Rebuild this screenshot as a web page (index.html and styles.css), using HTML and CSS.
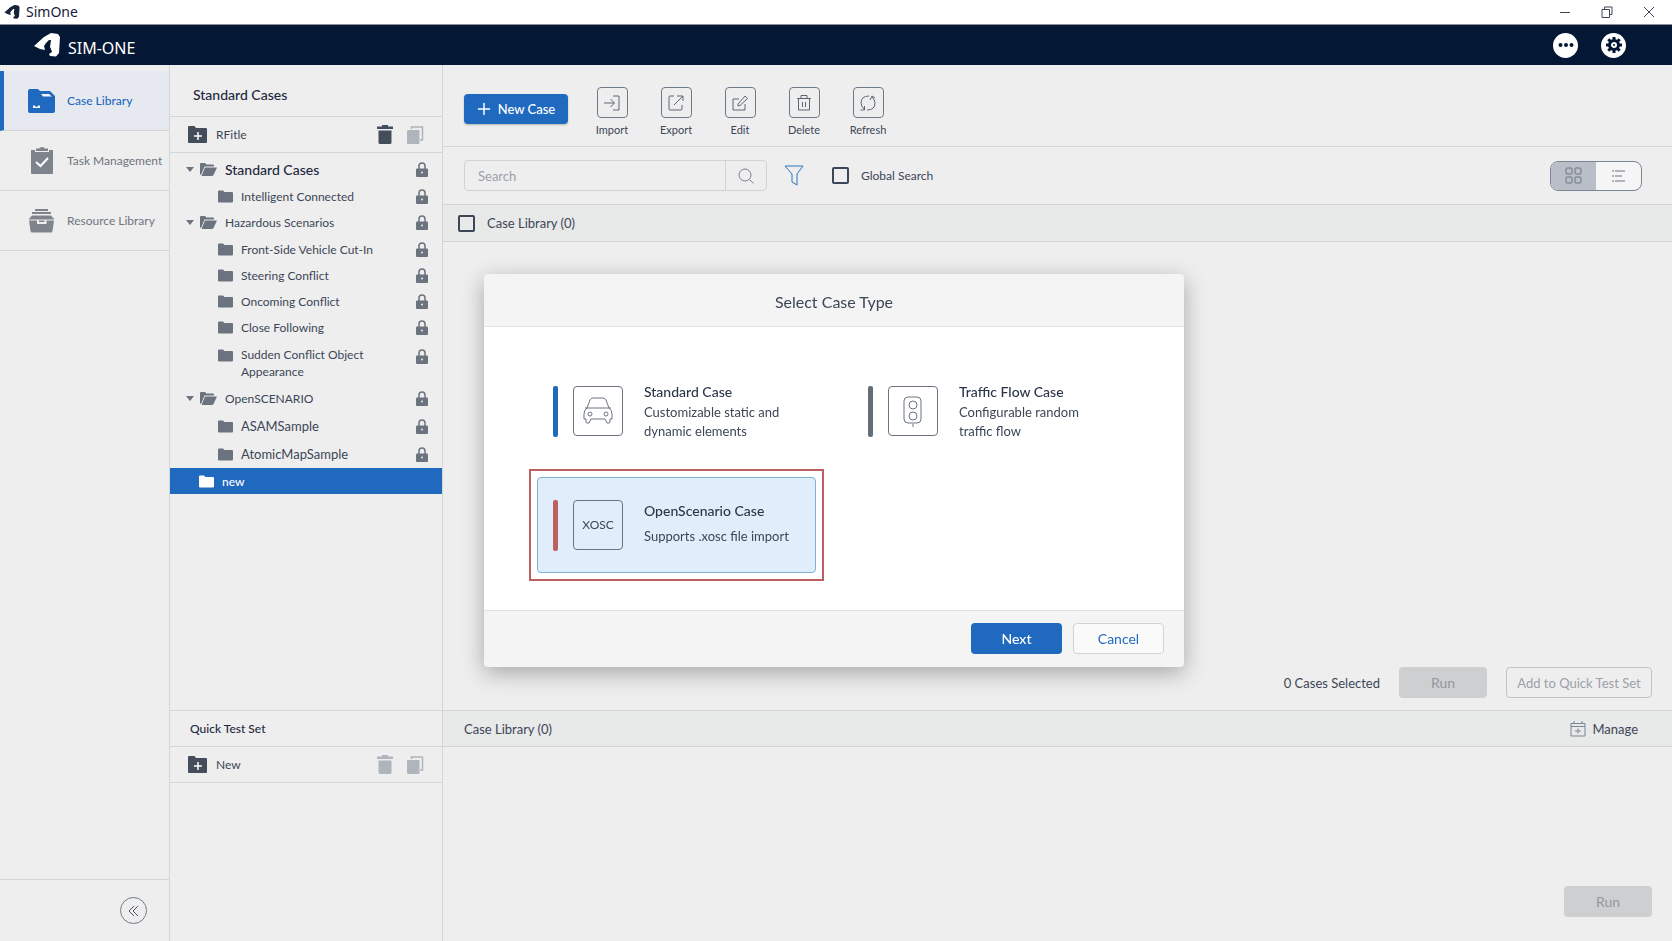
FILE: index.html
```
<!DOCTYPE html>
<html lang="en">
  <head>
    <meta charset="UTF-8" />
    <meta name="viewport" content="width=device-width, initial-scale=1.0" />
    <title>SimOne</title>
    <link rel="stylesheet" href="styles.css">
  </head>
  <body>
    <!-- shared icons -->
    <svg class="sprite" aria-hidden="true">
      <symbol id="logo" viewBox="0 0 26 24">
        <path d="M0 13 L10 4 L17 0 L24 1 L26 4 L25 20 L22 23.500 L16 23 L15 21 L18 19 L17 16 L16 14 L17 7 L15 7 L12 10 L10 13 L11 17 L6 16 Z" fill="currentColor" />
      </symbol>
      <symbol id="folder" viewBox="0 0 15 13">
        <path d="M0 1.500 Q0 .5 1 .5 H5 L6.500 2 H14 Q15 2 15 3 V11.500 Q15 12.500 14 12.500 H1 Q0 12.500 0 11.500 Z" fill="currentColor" />
      </symbol>
      <symbol id="folder-open" viewBox="0 0 17 13">
        <path d="M0 1 Q0 0 1 0 H5 L6.500 1.500 H13 Q14 1.500 14 2.500 V3.500 H4.500 L1.500 11 L0 12 Z" fill="currentColor" />
        <path d="M5 4.500 H17 L13.500 12 Q13 13 12 13 H1.500 Z" fill="currentColor" />
      </symbol>
      <symbol id="folder-add" viewBox="0 0 19 17">
        <path d="M0 1 Q0 0 1 0 H6.500 L8 2 H18 Q19 2 19 3 V16 Q19 17 18 17 H1 Q0 17 0 16 Z" fill="currentColor" />
        <path d="M10 6 V14 M6 10 H14" stroke="#fff" stroke-width="1.500" />
      </symbol>
      <symbol id="trash" viewBox="0 0 16 19">
        <path d="M5 0 H11 V1.500 H16 V4 H0 V1.500 H5 Z M1.500 5.500 H14.500 V17.500 Q14.500 19 13 19 H3 Q1.500 19 1.500 17.500 Z" fill="currentColor" />
      </symbol>
      <symbol id="copy" viewBox="0 0 17 18">
        <path d="M4.500 3 V1 H15.500 V14 H13" fill="none" stroke="currentColor" stroke-width="1.500" />
        <path d="M1 4 H11.500 Q12.500 4 12.500 5 V17 Q12.500 18 11.500 18 H1 Q0 18 0 17 V5 Q0 4 1 4 Z" fill="currentColor" />
      </symbol>
      <symbol id="lock" viewBox="0 0 12 15">
        <path d="M3 7 V4 Q3 1 6 1 Q9 1 9 4 V7" fill="none" stroke="currentColor" stroke-width="1.500" />
        <rect y="6.500" width="12" height="8.500" rx="1" fill="currentColor" />
        <circle cx="6" cy="10.500" r="1" fill="#eee" />
      </symbol>
    </svg>

    <div class="titlebar">
      <svg class="titlebar-logo"><use href="#logo" /></svg>
      <span class="titlebar-name">SimOne</span>
      <button class="window-button" aria-label="Minimize">
        <svg width="12" height="12"><path d="M1 6.500 H11" /></svg>
      </button>
      <button class="window-button" aria-label="Restore">
        <svg width="12" height="12"><path d="M1 3.500 H8.500 V11.500 H1 Z M3.500 3.500 V1 H11 V8.500 H8.500" /></svg>
      </button>
      <button class="window-button" aria-label="Close">
        <svg width="12" height="12"><path d="M1 1 L11 11 M11 1 L1 11" /></svg>
      </button>
    </div>

    <header class="header">
      <svg class="header-logo"><use href="#logo" /></svg>
      <span class="header-name">SIM-ONE</span>
      <button class="round-button" aria-label="More">
        <svg width="16" height="16" fill="currentColor">
          <circle cx="2.500" cy="8" r="2" /><circle cx="8" cy="8" r="2" /><circle cx="13.500" cy="8" r="2" />
        </svg>
      </button>
      <button class="round-button" aria-label="Settings">
        <svg width="16" height="16" viewBox="0 0 16 16">
          <circle cx="8" cy="8" r="4.500" fill="none" stroke="currentColor" stroke-width="3" />
          <path d="M8 0 V3 M8 13 V16 M0 8 H3 M13 8 H16 M2.300 2.300 L4.500 4.500 M11.500 11.500 L13.700 13.700 M2.300 13.700 L4.500 11.500 M11.500 4.500 L13.700 2.300" stroke="currentColor" stroke-width="3" />
          <circle cx="8" cy="8" r="1" fill="currentColor" />
        </svg>
      </button>
    </header>

    <div class="layout">
      <nav class="nav">
        <a href="#" class="nav-item nav-item-active">
          <svg width="28" height="24" viewBox="0 0 28 24">
            <path d="M0 2 Q0 0 2 0 H10 L12 2 H22 L27 7 V22 Q27 24 25 24 H2 Q0 24 0 22 Z" fill="currentColor" />
            <path d="M13 5 H21 L24 7.500 H15 Z" fill="#f2f6fa" />
            <path d="M5 16.500 H7 V17.500 H10 V16.500 H12 V19 H5 Z" fill="#f2f6fa" />
          </svg>
          Case Library
        </a>
        <a href="#" class="nav-item">
          <svg width="28" height="28" viewBox="0 0 28 28">
            <path d="M3 3 H7 V5 H21 V3 H25 V26 Q25 27 24 27 H4 Q3 27 3 26 Z M8 1.500 H11 Q12 0 14 0 Q16 0 17 1.500 H20 V4 H8 Z" fill="currentColor" />
            <path d="M8 15 L12.500 19 L20 11" fill="none" stroke="#fff" stroke-width="2" />
          </svg>
          Task Management
        </a>
        <a href="#" class="nav-item">
          <svg width="28" height="24" viewBox="0 0 28 24">
            <path d="M7 1 H20 M4 4 H23" stroke="currentColor" stroke-width="2" />
            <path d="M4 6.500 H23 L26.500 10.500 H.5 Z M1 11.500 H26 L24.500 22 Q24 23.500 23 23.500 H4 Q3 23.500 2.500 22 Z" fill="currentColor" />
            <path d="M10 11 V14 H17.500 V11" fill="none" stroke="#eee" stroke-width="2" />
          </svg>
          Resource Library
        </a>
        <div class="nav-footer">
          <button class="collapse-button" aria-label="Collapse menu">
            <svg width="12" height="12"><path d="M6 1 L1 6 L6 11 M10 1 L5 6 L10 11" /></svg>
          </button>
        </div>
      </nav>

      <aside class="panel">
        <section class="cases">
          <h2 class="panel-title">Standard Cases</h2>
          <div class="panel-tools">
            <button class="folder-button"><svg width="19" height="17"><use href="#folder-add" /></svg>RFitle</button>
            <button class="tool-button" aria-label="Delete folder"><svg width="16" height="19"><use href="#trash" /></svg></button>
            <button class="tool-button" aria-label="Copy folder" disabled><svg width="17" height="18"><use href="#copy" /></svg></button>
          </div>
          <ul class="tree">
            <li class="tree-row tree-parent tree-strong"><span class="arrow"></span><svg class="open-icon"><use href="#folder-open" /></svg><span class="tree-label">Standard Cases</span><svg class="lock"><use href="#lock" /></svg></li>
            <li class="tree-row tree-child"><svg class="folder-icon"><use href="#folder" /></svg><span class="tree-label">Intelligent Connected</span><svg class="lock"><use href="#lock" /></svg></li>
            <li class="tree-row tree-parent"><span class="arrow"></span><svg class="open-icon"><use href="#folder-open" /></svg><span class="tree-label">Hazardous Scenarios</span><svg class="lock"><use href="#lock" /></svg></li>
            <li class="tree-row tree-child"><svg class="folder-icon"><use href="#folder" /></svg><span class="tree-label">Front-Side Vehicle Cut-In</span><svg class="lock"><use href="#lock" /></svg></li>
            <li class="tree-row tree-child"><svg class="folder-icon"><use href="#folder" /></svg><span class="tree-label">Steering Conflict</span><svg class="lock"><use href="#lock" /></svg></li>
            <li class="tree-row tree-child"><svg class="folder-icon"><use href="#folder" /></svg><span class="tree-label">Oncoming Conflict</span><svg class="lock"><use href="#lock" /></svg></li>
            <li class="tree-row tree-child"><svg class="folder-icon"><use href="#folder" /></svg><span class="tree-label">Close Following</span><svg class="lock"><use href="#lock" /></svg></li>
            <li class="tree-row tree-child tree-tall"><svg class="folder-icon"><use href="#folder" /></svg><span class="tree-label">Sudden Conflict Object Appearance</span><svg class="lock"><use href="#lock" /></svg></li>
            <li class="tree-row tree-parent"><span class="arrow"></span><svg class="open-icon"><use href="#folder-open" /></svg><span class="tree-label">OpenSCENARIO</span><svg class="lock"><use href="#lock" /></svg></li>
            <li class="tree-row tree-child tree-large"><svg class="folder-icon"><use href="#folder" /></svg><span class="tree-label">ASAMSample</span><svg class="lock"><use href="#lock" /></svg></li>
            <li class="tree-row tree-child tree-large"><svg class="folder-icon"><use href="#folder" /></svg><span class="tree-label">AtomicMapSample</span><svg class="lock"><use href="#lock" /></svg></li>
            <li class="tree-row tree-selected"><svg class="folder-icon"><use href="#folder" /></svg><span class="tree-label">new</span></li>
          </ul>
        </section>
        <section class="quick">
          <h2 class="quick-title">Quick Test Set</h2>
          <div class="panel-tools">
            <button class="folder-button"><svg width="19" height="17"><use href="#folder-add" /></svg>New</button>
            <button class="tool-button" aria-label="Delete test set" disabled><svg width="16" height="19"><use href="#trash" /></svg></button>
            <button class="tool-button" aria-label="Copy test set" disabled><svg width="17" height="18"><use href="#copy" /></svg></button>
          </div>
        </section>
      </aside>

      <main class="main">
        <section class="cases">
          <div class="toolbar">
            <button class="primary new-case">
              <svg width="14" height="14"><path d="M7 1 V13 M1 7 H13" /></svg>
              New Case
            </button>
            <button class="action">
              <span class="action-icon"><svg width="20" height="20"><path d="M2 10 H12 M8.500 6 L12.500 10 L8.500 14 M11 3 H17 V17 H11" /></svg></span>
              Import
            </button>
            <button class="action">
              <span class="action-icon"><svg width="20" height="20"><path d="M8 3 H4 Q3 3 3 4 V16 Q3 17 4 17 H15 Q16 17 16 16 V12 M8 12 L17 3 M11 3 H17 V8" /></svg></span>
              Export
            </button>
            <button class="action">
              <span class="action-icon"><svg width="20" height="20"><path d="M9 6 H3 V17 H15 V11 M8 13 V11 L15 3 L17.500 5.500 L10 12.500 Z" /></svg></span>
              Edit
            </button>
            <button class="action">
              <span class="action-icon"><svg width="20" height="20"><path d="M3 5.500 H17 M7 5 V2.500 H13 V5 M4.500 6 V17 H15.500 V6 M8.500 9 V14 M11.500 9 V14" /></svg></span>
              Delete
            </button>
            <button class="action">
              <span class="action-icon"><svg width="20" height="20"><path d="M11 3 Q3 3 3 10 Q3 13 6 16 M2.500 17 H6.500 V13 M9 17 Q17 17 17 10 Q17 7 14 4 M12 7 L14 3 L17 5" /></svg></span>
              Refresh
            </button>
          </div>

          <div class="filters">
            <form class="search">
              <input type="text" placeholder="Search" aria-label="Search" />
              <button type="button" aria-label="Search cases">
                <svg width="16" height="16"><circle cx="7" cy="7" r="6" /><path d="M11.500 11.500 L15.500 15.500" /></svg>
              </button>
            </form>
            <button class="filter-button" aria-label="Filter">
              <svg width="20" height="21"><path d="M1 1 H19 L13 9 V20 L8 17 V9 Z" /></svg>
            </button>
            <label class="check global-search"><input type="checkbox" />Global Search</label>
            <div class="view-toggle">
              <button class="view-active" aria-label="Grid view">
                <svg width="18" height="18"><rect x="1" y="1" width="6" height="6" rx="1" /><rect x="10" y="1" width="6" height="6" rx="1" /><rect x="1" y="10" width="6" height="6" rx="1" /><rect x="10" y="10" width="6" height="6" rx="1" /></svg>
              </button>
              <button aria-label="List view">
                <svg width="14" height="14"><path d="M0 2 H2 M3 2 H13 M0 7 H2 M3 7 H10 M0 12 H2 M3 12 H13" /></svg>
              </button>
            </div>
          </div>

          <div class="list-header"><label class="check"><input type="checkbox" />Case Library (0)</label></div>

          <div class="run-bar">
            <span>0 Cases Selected</span>
            <button class="run-button" disabled>Run</button>
            <button class="add-button" disabled>Add to Quick Test Set</button>
          </div>
        </section>

        <section class="quick">
          <div class="quick-header">
            <span>Case Library (0)</span>
            <button class="manage-button">
              <svg width="16" height="16"><path d="M1 2.500 H15 V15 H1 Z M1 5.500 H15 M4 0 V3 M12 0 V3 M5 10 H11 M8 7.500 V12.500" /></svg>
              Manage
            </button>
          </div>
          <div class="quick-footer"><button class="run-button" disabled>Run</button></div>
        </section>
      </main>
    </div>

    <div class="overlay">
      <form class="dialog" role="dialog" aria-labelledby="dialog-title">
        <h1 class="dialog-title" id="dialog-title">Select Case Type</h1>
        <div class="dialog-body">
          <label class="case-type">
            <span class="case-inner">
              <input type="radio" name="type" class="bar-blue" />
              <span class="case-icon">
                <svg width="30" height="28"><path d="M4 11 L7 3 Q8 1 10 1 H20 Q22 1 23 3 L26 11 M2 11 H28 M4 11 Q1 13 1 17 V22 H3 V25 Q3 26 4 26 H6 L8 22 H22 L24 26 H26 Q27 26 27 25 V22 H29 V17 Q29 13 26 11" /><circle cx="7" cy="17" r="2" /><circle cx="23" cy="17" r="2" /></svg>
              </span>
              <span class="case-text"><strong>Standard Case</strong><span>Customizable static and dynamic elements</span></span>
            </span>
          </label>
          <label class="case-type">
            <span class="case-inner">
              <input type="radio" name="type" class="bar-grey" />
              <span class="case-icon">
                <svg width="20" height="32"><rect x="1" y="2" width="17" height="26" rx="4" /><circle cx="10" cy="10" r="4" /><circle cx="10" cy="21" r="4" /><path d="M10 29 V32" /></svg>
              </span>
              <span class="case-text"><strong>Traffic Flow Case</strong><span>Configurable random traffic flow</span></span>
            </span>
          </label>
          <label class="case-type case-selected">
            <span class="case-inner">
              <input type="radio" name="type" class="bar-red" checked />
              <span class="case-icon">XOSC</span>
              <span class="case-text"><strong>OpenScenario Case</strong><span>Supports .xosc file import</span></span>
            </span>
          </label>
        </div>
        <div class="dialog-footer">
          <button type="button" class="primary">Next</button>
          <button type="button" class="cancel">Cancel</button>
        </div>
      </form>
    </div>
  </body>
</html>
```

FILE: styles.css
```
* {
  box-sizing: border-box;
}
body {
  margin: 0;
  min-height: 100vh;
  display: flex;
  flex-direction: column;
  font-family: Lato, "Noto Sans", sans-serif;
  font-size: 13px;
  line-height: 18px;
  color: #3c4657;
  background: #eeeeee;
}
button,
input {
  font: inherit;
  color: inherit;
}
button {
  display: flex;
  align-items: center;
  justify-content: center;
  padding: 0;
  border: none;
  background: none;
}
svg {
  flex: none;
}
.sprite {
  display: none;
}

/* window bar and header */
.titlebar {
  height: 25px;
  display: flex;
  align-items: center;
  padding: 0 11px 0 4px;
  background: #fff;
  color: #16213a;
  border-bottom: 1px solid #8a919e;
}
.titlebar-logo {
  width: 16px;
  height: 14px;
}
.titlebar-name {
  margin: 0 auto 0 6px;
  font-family: "Noto Sans", sans-serif;
  font-size: 14px;
}
.window-button {
  width: 24px;
  height: 24px;
  margin-left: 18px;
}
.window-button svg {
  fill: none;
  stroke: #3c4657;
}
.header {
  height: 40px;
  display: flex;
  align-items: center;
  gap: 23px;
  padding: 0 46px 0 34px;
  background: #041835;
  color: #fff;
}
.header-logo {
  width: 26px;
  height: 24px;
}
.header-name {
  margin: 5px auto 0 -15px;
  font-family: "Noto Sans", sans-serif;
  font-size: 16px;
}
.round-button {
  width: 25px;
  height: 25px;
  border-radius: 50%;
  background: #fff;
  color: #041835;
}

.layout {
  flex: 1;
  display: flex;
}

/* left menu */
.nav {
  width: 170px;
  flex: none;
  display: flex;
  flex-direction: column;
  padding-top: 6px;
  border-right: 1px solid #d3d5d7;
}
.nav-item {
  height: 60px;
  display: flex;
  align-items: center;
  gap: 11px;
  padding-left: 28px;
  border-bottom: 1px solid #d3d5d7;
  color: #6f757e;
  font-size: 12px;
  text-decoration: none;
  white-space: nowrap;
}
.nav-item svg {
  color: #7f848c;
}
.nav-item-active,
.nav-item-active svg {
  color: #1f69bf;
}
.nav-item-active {
  padding-left: 24px;
  border-left: 4px solid #1f69bf;
  background: #e6eaf0;
  font-weight: 500;
}
.nav-footer {
  height: 62px;
  margin-top: auto;
  padding: 17px 22px;
  border-top: 1px solid #d3d5d7;
}
.collapse-button {
  width: 27px;
  height: 27px;
  margin-left: auto;
  border: 1px solid #6f7a89;
  border-radius: 50%;
}
.collapse-button svg {
  fill: none;
  stroke: #4c5666;
}

/* case tree */
.panel {
  width: 273px;
  flex: none;
  display: flex;
  flex-direction: column;
  border-right: 1px solid #d3d5d7;
}
.cases {
  flex: 1;
  display: flex;
  flex-direction: column;
}
.quick {
  height: 231px;
  border-top: 1px solid #d3d5d7;
}
.panel-title,
.quick-title {
  margin: 0;
  display: flex;
  align-items: center;
  border-bottom: 1px solid #d3d5d7;
  color: #1d2840;
  font-weight: 500;
}
.panel-title {
  height: 52px;
  padding: 8px 23px 0;
  font-size: 14px;
}
.quick-title {
  height: 36px;
  padding: 0 20px;
  font-size: 12px;
}
.panel-tools {
  height: 36px;
  display: flex;
  align-items: center;
  gap: 14px;
  padding: 0 18px 0 18px;
  border-bottom: 1px solid #d3d5d7;
}
.folder-button {
  gap: 9px;
  margin-right: auto;
  font-size: 12px;
}
.folder-button svg,
.tool-button {
  color: #444d5a;
}
.tool-button:disabled {
  color: #b0b4bd;
}
.tree {
  margin: 0;
  padding: 3px 0 0;
  list-style: none;
}
.tree-row {
  height: 27px;
  display: flex;
  align-items: center;
  padding-right: 14px;
  font-size: 12px;
  line-height: 17px;
}
.tree-parent {
  padding-left: 16px;
}
.tree-child {
  height: 26px;
  padding-left: 48px;
}
.tree-large {
  height: 28px;
  font-size: 13px;
}
.tree-strong {
  font-size: 14px;
  font-weight: 500;
  color: #1d2840;
}
.tree-label {
  flex: 1;
  margin-left: 8px;
}
.tree-child .tree-label {
  max-width: 150px;
  margin-right: auto;
}
.tree-tall {
  height: 45px;
  align-items: flex-start;
  padding-top: 6px;
}
.tree-tall svg {
  margin-top: 3px;
}
.tree-selected {
  height: 26px;
  padding-left: 29px;
  background: #1f69bf;
  color: #fff;
  font-weight: 500;
}
.arrow {
  margin-right: 6px;
  border: 4px solid transparent;
  border-top: 5px solid #6b737e;
  border-bottom: 0;
}
.open-icon {
  width: 17px;
  height: 13px;
  color: #6b737e;
}
.folder-icon {
  width: 15px;
  height: 13px;
  color: #6b737e;
}
.tree-selected .folder-icon {
  color: #fff;
}
.lock {
  width: 12px;
  height: 15px;
  color: #6b737e;
}

/* case list */
.main {
  flex: 1;
  display: flex;
  flex-direction: column;
}
.primary {
  border-radius: 4px;
  background: #1f69bf;
  color: #fff;
  font-weight: 500;
}
.toolbar {
  height: 82px;
  display: flex;
  padding: 22px 21px 0;
  border-bottom: 1px solid #d3d5d7;
}
.new-case {
  width: 104px;
  height: 30px;
  gap: 7px;
  margin: 7px 12px 0 0;
  box-shadow: 0 1px 2px rgba(0, 0, 0, 0.25);
}
.new-case svg {
  stroke: #fff;
  stroke-width: 1.5;
}
.action {
  width: 64px;
  height: 52px;
  flex-direction: column;
  justify-content: flex-end;
  gap: 3px;
  font-size: 11px;
}
.action-icon {
  width: 31px;
  height: 31px;
  display: flex;
  align-items: center;
  justify-content: center;
  border: 1px solid #6f7a89;
  border-radius: 4px;
}
.action-icon svg {
  fill: none;
  stroke: #5d6675;
}
.filters {
  height: 58px;
  display: flex;
  align-items: center;
  padding: 0 30px 0 21px;
  border-bottom: 1px solid #d3d5d7;
}
.search {
  display: flex;
  width: 303px;
  height: 31px;
  border: 1px solid #d0d3d6;
  border-radius: 4px;
}
.search input {
  flex: 1;
  min-width: 0;
  padding: 0 13px;
  border: none;
  background: none;
}
.search input::placeholder {
  color: #9ca1a9;
}
.search button {
  width: 41px;
  border-left: 1px solid #d0d3d6;
}
.search svg {
  fill: none;
  stroke: #7a828e;
}
.filter-button {
  margin: 0 28px 0 17px;
}
.filter-button svg {
  fill: none;
  stroke: #2f74bd;
}
.check {
  display: flex;
  align-items: center;
  gap: 12px;
}
.check input {
  appearance: none;
  width: 17px;
  height: 17px;
  margin: 0;
  border: 2px solid #3c4657;
  border-radius: 2px;
}
.global-search {
  font-size: 12px;
}
.view-toggle {
  height: 30px;
  display: flex;
  margin-left: auto;
  border: 1px solid #7b8593;
  border-radius: 8px;
  background: #f5f5f5;
  overflow: hidden;
}
.view-toggle button {
  width: 45px;
}
.view-toggle svg {
  fill: none;
  stroke: #6b7480;
}
.view-toggle .view-active {
  background: #b9bec8;
}
.list-header {
  height: 37px;
  display: flex;
  align-items: center;
  padding-left: 15px;
  border-bottom: 1px solid #d3d5d7;
  background: #e8e9e9;
}
.run-bar {
  display: flex;
  align-items: center;
  gap: 19px;
  margin-top: auto;
  margin-left: auto;
  padding: 0 20px 12px;
}
.run-button {
  width: 88px;
  height: 31px;
  border-radius: 4px;
  background: #cecfd0;
  color: #9398a0;
  font-size: 14px;
}
.add-button {
  width: 146px;
  height: 31px;
  border: 1px solid #c0c3c8;
  border-radius: 4px;
  color: #9ca1a9;
}
.quick-header {
  height: 36px;
  display: flex;
  align-items: center;
  justify-content: space-between;
  padding: 0 34px 0 21px;
  border-bottom: 1px solid #d3d5d7;
  background: #e8e9e9;
}
.manage-button {
  gap: 6px;
}
.manage-button svg {
  fill: none;
  stroke: #7b8593;
}
.quick-footer {
  display: flex;
  justify-content: flex-end;
  padding: 139px 20px 0;
}

/* case type dialog */
.overlay {
  position: fixed;
  inset: 0;
  display: flex;
  align-items: center;
  justify-content: center;
  padding-right: 4px;
}
.dialog {
  width: 700px;
  border-radius: 4px;
  background: #f4f4f4;
  box-shadow: 0 6px 22px rgba(0, 0, 0, 0.3);
}
.dialog-title {
  margin: 0;
  padding: 18px 0 14px;
  border-bottom: 1px solid #dfe1e2;
  font-size: 16px;
  font-weight: 400;
  line-height: 20px;
  text-align: center;
}
.dialog-body {
  display: grid;
  grid-template-columns: 1fr 1fr;
  gap: 2px 20px;
  padding: 28px 45px 29px;
  background: #fff;
}
.case-type {
  height: 112px;
  padding: 7px;
  border: 1px solid transparent;
}
.case-inner {
  height: 96px;
  display: flex;
  align-items: center;
  padding-left: 15px;
  border: 1px solid transparent;
  border-radius: 4px;
}
.case-selected {
  border: 2px solid #bd5f5f;
  padding: 6px;
}
.case-selected .case-inner {
  border-color: #7fb3d6;
  background: #e0eefb;
}
.case-type input {
  appearance: none;
  width: 5px;
  height: 51px;
  margin: 0 15px 0 0;
  border-radius: 2px;
}
.bar-blue {
  background: #1f69bf;
}
.bar-grey {
  background: #646e79;
}
.bar-red {
  background: #bd5f5f;
}
.case-icon {
  width: 50px;
  height: 50px;
  flex: none;
  display: flex;
  align-items: center;
  justify-content: center;
  border: 1px solid #6b7480;
  border-radius: 4px;
  font-size: 12px;
}
.case-icon svg {
  fill: none;
  stroke: #6b7480;
}
.case-text {
  width: 150px;
  display: flex;
  flex-direction: column;
  margin-left: 21px;
  line-height: 19px;
}
.case-text strong {
  font-size: 14px;
  font-weight: 500;
  line-height: 22px;
  color: #2b3548;
}
.case-selected .case-text {
  gap: 5px;
  padding-bottom: 4px;
}
.dialog-footer {
  display: flex;
  justify-content: flex-end;
  gap: 11px;
  padding: 12px 20px 13px;
  border-top: 1px solid #dfe1e2;
  border-radius: 0 0 4px 4px;
}
.dialog-footer button {
  width: 91px;
  height: 31px;
  border-radius: 4px;
  font-size: 14px;
}
.dialog-footer .cancel {
  border: 1px solid #d0d3d6;
  background: #fafafa;
  color: #1f69bf;
}
```
